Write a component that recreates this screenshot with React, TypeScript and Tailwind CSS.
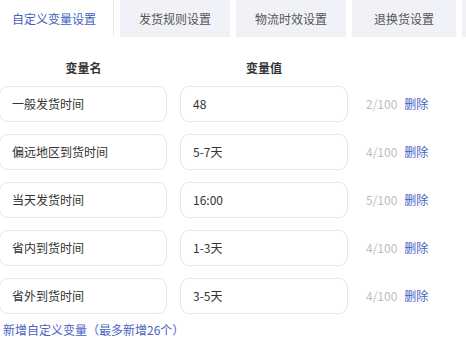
import React from 'react';

const tabs = ['自定义变量设置', '发货规则设置', '物流时效设置', '退换货设置'];

const rows = [
  { id: 'r1', name: '一般发货时间', value: '48', count: '2/100' },
  { id: 'r2', name: '偏远地区到货时间', value: '5-7天', count: '4/100' },
  { id: 'r3', name: '当天发货时间', value: '16:00', count: '5/100' },
  { id: 'r4', name: '省内到货时间', value: '1-3天', count: '4/100' },
  { id: 'r5', name: '省外到货时间', value: '3-5天', count: '4/100' },
];

export default function App() {
  return (
    <div
      className="w-[466px] h-[358px] overflow-hidden bg-white text-[12px] text-[#333]"
      style={{ fontFamily: '"Noto Sans CJK SC", "Liberation Sans", sans-serif' }}
    >
      {/* Tabs */}
      <div className="flex h-[37px] w-[520px] gap-[6px]">
        {tabs.map((t, i) =>
          i === 0 ? (
            <div
              key={t}
              className="w-[114px] flex items-center pl-[12px] text-[#3f5fbf] bg-white border-r border-[#e8e8ee]"
            >
              {t}
            </div>
          ) : (
            <div
              key={t}
              className={`${i === 3 ? 'w-[104px]' : 'w-[110px]'} flex items-center justify-center bg-[#f1f2f8] text-[#555]`}
            >
              {t}
            </div>
          )
        )}
        <div className="w-[20px] bg-[#f1f2f8]" />
      </div>

      {/* Header */}
      <div className="flex mt-[22px] h-[18px] items-center font-bold text-[#333]">
        <div className="w-[167px] text-center">变量名</div>
        <div className="w-[13px]" />
        <div className="w-[168px] text-center">变量值</div>
      </div>

      {/* Rows */}
      <div className="flex flex-col gap-[12px] mt-[9px]">
        {rows.map((r) => (
          <div key={r.id} className="flex items-center h-[36px]">
            <div className="w-[168px] h-full -ml-[1px] flex items-center pl-[12px] border border-[#e6e6e6] rounded-[9px]">
              {r.name}
            </div>
            <div className="w-[168px] h-full ml-[13px] flex items-center pl-[12px] border border-[#e6e6e6] rounded-[9px]">
              {r.value}
            </div>
            <span className="ml-[18px] text-[#bdbdbd]">{r.count}</span>
            <span className="ml-[7px] text-[#4a5fc1]">删除</span>
          </div>
        ))}
      </div>

      <div className="mt-[7px] pl-[3px] text-[#4a63c0]">新增自定义变量（最多新增26个）</div>
    </div>
  );
}
